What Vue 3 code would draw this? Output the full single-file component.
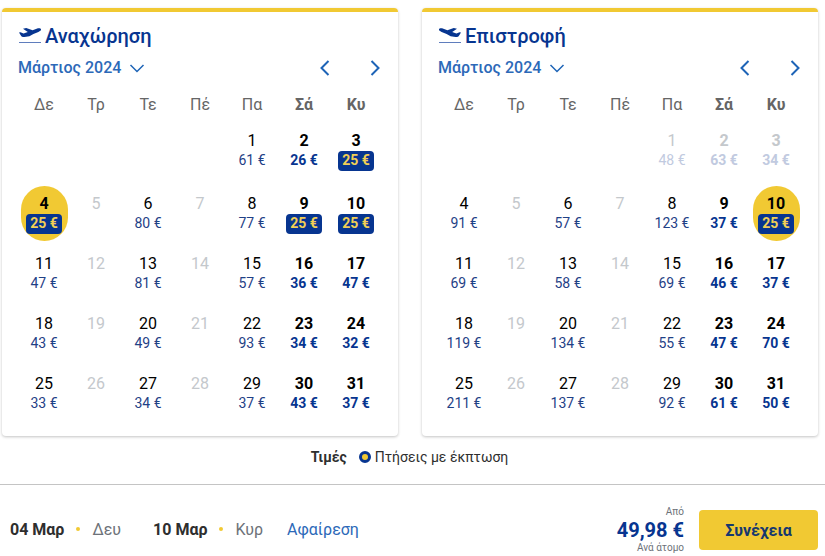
<script setup>
import { reactive } from 'vue'

const weekdays = ['Δε', 'Τρ', 'Τε', 'Πέ', 'Πα', 'Σά', 'Κυ']

// Builds Monday-first weeks; March 2024 starts on a Friday.
function buildWeeks(prices, deals, past) {
  const cells = [null, null, null, null]
  for (let n = 1; n <= 31; n++) {
    cells.push({ n, price: prices[n], deal: deals.includes(n), off: past.includes(n) || !prices[n] })
  }
  const weeks = []
  for (let i = 0; i < cells.length; i += 7) weeks.push(cells.slice(i, i + 7))
  return weeks
}

const calendars = reactive([
  {
    id: 'out',
    title: 'Αναχώρηση',
    month: 'Μάρτιος 2024',
    selected: 4,
    weeks: buildWeeks(
      { 1: 61, 2: 26, 3: 25, 4: 25, 6: 80, 8: 77, 9: 25, 10: 25, 11: 47, 13: 81, 15: 57, 16: 36, 17: 47, 18: 43, 20: 49, 22: 93, 23: 34, 24: 32, 25: 33, 27: 34, 29: 37, 30: 43, 31: 37 },
      [3, 4, 9, 10],
      []
    )
  },
  {
    id: 'back',
    title: 'Επιστροφή',
    month: 'Μάρτιος 2024',
    selected: 10,
    weeks: buildWeeks(
      { 1: 48, 2: 63, 3: 34, 4: 91, 6: 57, 8: 123, 9: 37, 10: 25, 11: 69, 13: 58, 15: 69, 16: 46, 17: 37, 18: 119, 20: 134, 22: 55, 23: 47, 24: 70, 25: 211, 27: 137, 29: 92, 30: 61, 31: 50 },
      [10],
      [1, 2, 3]
    )
  }
])

const trip = [
  { date: '04 Μαρ', day: 'Δευ' },
  { date: '10 Μαρ', day: 'Κυρ' }
]
</script>

<template>
  <main class="page">
    <div class="calendars">
      <section v-for="cal in calendars" :key="cal.id" class="card">
        <h2 class="title">
          <svg class="plane" :class="{ flipped: cal.id === 'back' }" viewBox="0 0 24 18" aria-hidden="true">
            <path class="body" d="M1 5.6 L2.4 5.2 L5.6 6.4 L9.8 4.9 L5 1.7 L8.2 1 L14.6 3.2 L18.6 1.8 C20.8 1 22.6 1.2 23 2.2 C23.4 3.2 22 4.2 20.4 4.9 L15.4 7 L11.4 9.2 L6.4 10 C4.8 10.2 3.8 9.6 3.2 8.9 Z" />
            <path class="ground" d="M1 15.5 H23" />
          </svg>
          {{ cal.title }}
        </h2>
        <div class="toolbar">
          <button type="button" class="month">
            {{ cal.month }}
            <svg class="caret" viewBox="0 0 16 10" aria-hidden="true"><path d="M1.5 2 L8 8.5 L14.5 2" /></svg>
          </button>
          <div class="arrows">
            <button type="button" class="arrow" aria-label="Προηγούμενος μήνας">
              <svg viewBox="0 0 10 16" aria-hidden="true"><path d="M8.5 1 L1.5 8 L8.5 15" /></svg>
            </button>
            <button type="button" class="arrow" aria-label="Επόμενος μήνας">
              <svg viewBox="0 0 10 16" aria-hidden="true"><path d="M1.5 1 L8.5 8 L1.5 15" /></svg>
            </button>
          </div>
        </div>
        <table class="month-grid">
          <thead>
            <tr>
              <th v-for="(d, i) in weekdays" :key="d" scope="col" :class="{ weekend: i > 4 }">{{ d }}</th>
            </tr>
          </thead>
          <tbody>
            <tr v-for="(week, w) in cal.weeks" :key="w">
              <td v-for="(cell, i) in week" :key="i">
                <button
                  v-if="cell"
                  type="button"
                  class="day"
                  :class="{ weekend: i > 4, selected: cell.n === cal.selected }"
                  :disabled="cell.off"
                  @click="cal.selected = cell.n"
                >
                  <span class="num">{{ cell.n }}</span>
                  <span v-if="cell.price" class="price" :class="{ deal: cell.deal }">{{ cell.price }} €</span>
                </button>
              </td>
            </tr>
          </tbody>
        </table>
      </section>
    </div>

    <div class="legend">
      <strong>Τιμές</strong>
      <span class="legend-item"><i class="ring"></i>Πτήσεις με έκπτωση</span>
    </div>

    <footer class="summary">
      <div class="trip">
        <div v-for="leg in trip" :key="leg.date" class="leg">
          <strong>{{ leg.date }}</strong>
          <i class="dot"></i>
          <span>{{ leg.day }}</span>
        </div>
        <a href="#" class="remove">Αφαίρεση</a>
      </div>
      <div class="checkout">
        <div class="total">
          <small>Από</small>
          <strong>49,98 €</strong>
          <small>Ανά άτομο</small>
        </div>
        <button type="button" class="continue">Συνέχεια</button>
      </div>
    </footer>
  </main>
</template>

<style>
body {
  background: #fff;
}
</style>

<style scoped>
.page {
  font-family: Roboto, "Liberation Sans", sans-serif;
  font-size: 16px;
  color: #2e2e2e;
  padding-top: 8px;
}
button {
  font: inherit;
  color: inherit;
  background: none;
  border: 0;
  padding: 0;
  cursor: pointer;
}
.calendars {
  display: grid;
  grid-template-columns: 1fr 1fr;
  gap: 24px;
  padding: 0 7px 0 2px;
}
.card {
  border-top: 4px solid #f1c933;
  border-radius: 4px;
  box-shadow: 0 1px 3px rgba(0, 0, 0, 0.24);
  padding: 12px 16px 10px;
}
.title {
  display: flex;
  align-items: center;
  gap: 3px;
  margin: 0;
  font-size: 20px;
  line-height: 24px;
  font-weight: 500;
  color: #073590;
}
.plane {
  width: 24px;
  height: 18px;
}
.plane .body {
  fill: #073590;
}
.plane .ground {
  fill: none;
  stroke: #5f7dbd;
  stroke-width: 1;
}
.plane.flipped .body {
  transform: scaleX(-1);
  transform-origin: 12px 9px;
}
.toolbar {
  display: flex;
  justify-content: space-between;
  align-items: center;
  height: 32px;
  margin-top: 4px;
}
.month {
  display: flex;
  align-items: center;
  gap: 8px;
  line-height: 18px;
  font-weight: 500;
  color: #2c69b8;
}
.caret {
  width: 16px;
  height: 10px;
}
.caret path,
.arrow path {
  fill: none;
  stroke: #1e64b7;
  stroke-width: 2;
}
.caret path {
  stroke-width: 1.5;
}
.arrows {
  display: flex;
  gap: 36px;
}
.arrow {
  display: flex;
  width: 14px;
  justify-content: center;
}
.arrow svg {
  width: 10px;
  height: 16px;
}
.month-grid {
  width: 100%;
  table-layout: fixed;
  border-collapse: collapse;
}
th {
  height: 37px;
  padding: 2px 0 0;
  font-weight: 400;
  color: #666;
}
th.weekend {
  font-weight: 700;
}
td {
  height: 60px;
  padding: 0;
  text-align: center;
  vertical-align: top;
}
tbody tr:first-child td {
  height: 63px;
}
.day {
  display: flex;
  flex-direction: column;
  align-items: center;
  width: 47px;
  height: 55px;
  margin: 0 auto;
  padding: 8px 0 7px;
  border-radius: 24px;
  line-height: 20px;
  color: #000;
}
.day.weekend,
.day.selected {
  font-weight: 700;
}
.day.selected {
  background: #f1c933;
}
.price {
  padding-bottom: 2px;
  font-size: 14px;
  line-height: 18px;
  color: #1f4186;
  white-space: nowrap;
}
.weekend .price {
  color: #073590;
}
.day .price.deal {
  padding: 0 4px 2px;
  border-radius: 4px;
  background: #073590;
  color: #f1cf55;
}
.day:disabled {
  color: #c4c8cc;
  cursor: default;
}
.day:disabled .price {
  color: #c1cae0;
}
.legend {
  display: flex;
  justify-content: center;
  align-items: center;
  gap: 12px;
  padding: 12px 6px 18px 0;
  font-size: 14px;
  line-height: 18px;
}
.legend strong {
  font-weight: 700;
}
.legend-item {
  display: flex;
  align-items: center;
  gap: 4px;
}
.ring {
  width: 6px;
  height: 6px;
  border: 3px solid #073590;
  border-radius: 50%;
  background: #f1c933;
}
.summary {
  display: flex;
  justify-content: space-between;
  align-items: center;
  border-top: 1px solid #c4c4c4;
  padding: 21px 7px 0 10px;
}
.trip {
  display: flex;
  align-items: center;
  padding-bottom: 2px;
}
.leg {
  display: flex;
  align-items: center;
  gap: 12px;
  margin-right: 32px;
  color: #6d7279;
}
.leg:nth-child(2) {
  margin-right: 24px;
}
.leg strong {
  font-weight: 700;
  color: #2e2e2e;
}
.dot {
  width: 4px;
  height: 4px;
  border-radius: 50%;
  background: #f1c933;
}
.remove {
  color: #2c69b8;
  text-decoration: none;
}
.checkout {
  display: flex;
  align-items: center;
  gap: 15px;
}
.total {
  display: flex;
  flex-direction: column;
  align-items: flex-end;
}
.total small {
  font-size: 10px;
  line-height: 12px;
  color: #6d7279;
}
.total strong {
  font-size: 20px;
  line-height: 24px;
  font-weight: 700;
  color: #073590;
}
.continue {
  min-width: 119px;
  height: 40px;
  border-radius: 4px;
  background: #f1c933;
  color: #16386f;
  font-weight: 700;
}
</style>
